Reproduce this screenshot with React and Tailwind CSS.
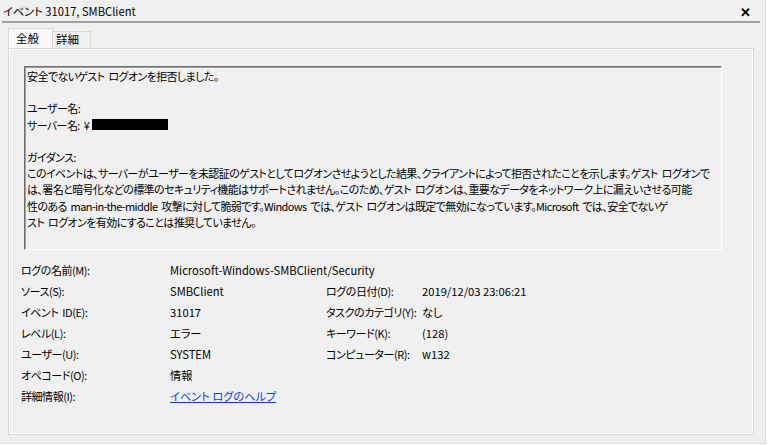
import React from "react";

const font = "font-['Noto_Sans_CJK_JP','Noto_Sans',sans-serif] [font-feature-settings:'palt']";
const cjk = "text-[11px] tracking-[-0.45px] [word-spacing:2px]";
const box = "text-[11px] tracking-[-0.6px] [word-spacing:2px]";
const latin = "text-[11.2px] tracking-normal";

function Row({ a, b, c, d, link }) {
  return (
    <div className="flex h-[21px] items-center">
      <div className={`w-[149px] shrink-0 whitespace-nowrap ${cjk}`}>{a}</div>
      <div className={`w-[156px] shrink-0 whitespace-nowrap ${latin}`}>
        {link ? (
          <span className="text-[#0a3be0] underline">{b}</span>
        ) : (
          b
        )}
      </div>
      {c !== undefined && (
        <div className={`w-[96px] shrink-0 whitespace-nowrap ${cjk}`}>{c}</div>
      )}
      {d !== undefined && (
        <div className={`whitespace-nowrap ${latin}`}>{d}</div>
      )}
    </div>
  );
}

export default function App() {
  return (
    <div className={`w-[768px] h-[445px] bg-white ${font} text-[11.5px] text-black`}>
      <div className="w-[766px] h-[444px] bg-[#f0f0f0] border-r border-b border-[#dcdcdc] flex flex-col">
        {/* title */}
        <div className="h-[21px] flex items-center justify-between pl-[3px] pr-[14px] pt-[1px]">
          <span className="whitespace-nowrap text-[11.2px]">イベント 31017, SMBClient</span>
          <span className="text-[13px] font-bold leading-none">✕</span>
        </div>
        <div className="mx-[2px] w-[758px] h-[2px] bg-[#a0a0a0]" />
        {/* tabs */}
        <div className="flex items-end pl-[8px] mt-[5px] h-[20px]">
          <div className="w-[45px] h-[20px] bg-[#f9f9f9] border border-b-0 border-[#d9d9d9] flex items-center pl-[7px]">
            全般
          </div>
          <div className="w-[38px] h-[17px] bg-[#f0f0f0] border border-l-0 border-b-0 border-[#d9d9d9] flex items-center pl-[3px]">
            詳細
          </div>
        </div>
        {/* panel */}
        <div className="ml-[8px] w-[746px] h-[387px] border border-[#d9d9d9]">
          <div className="w-full h-full border border-white pl-[14px] pt-[16px]">
            <div className="w-[698px] h-[184px] border-t border-l border-[#6e6e6e] border-r border-b border-r-white border-b-white bg-[#f0f0f0]">
              <div className={`w-full h-full border-t border-l border-[#a0a0a0] border-r-0 border-b-0 pl-[1px] leading-[16.2px] whitespace-nowrap ${box}`}>
                <div>安全でないゲスト ログオンを拒否しました。</div>
                <div>&nbsp;</div>
                <div>ユーザー名:</div>
                <div className="flex items-center">
                  サーバー名: ¥<span className="inline-block w-[76px] h-[11px] bg-black ml-[3px]" />
                </div>
                <div>&nbsp;</div>
                <div>ガイダンス:</div>
                <div>このイベントは、サーバーがユーザーを未認証のゲストとしてログオンさせようとした結果、クライアントによって拒否されたことを示します。ゲスト ログオンで</div>
                <div>は、署名と暗号化などの標準のセキュリティ機能はサポートされません。このため、ゲスト ログオンは、重要なデータをネットワーク上に漏えいさせる可能</div>
                <div>性のある man-in-the-middle 攻撃に対して脆弱です。Windows では、ゲスト ログオンは既定で無効になっています。Microsoft では、安全でないゲ</div>
                <div>スト ログオンを有効にすることは推奨していません。</div>
              </div>
            </div>
            <div className="mt-[10px] -ml-[3px]">
              <Row a="ログの名前(M):" b="Microsoft-Windows-SMBClient/Security" />
              <Row a="ソース(S):" b="SMBClient" c="ログの日付(D):" d="2019/12/03 23:06:21" />
              <Row a="イベント ID(E):" b="31017" c="タスクのカテゴリ(Y):" d="なし" />
              <Row a="レベル(L):" b="エラー" c="キーワード(K):" d="(128)" />
              <Row a="ユーザー(U):" b="SYSTEM" c="コンピューター(R):" d="w132" />
              <Row a="オペコード(O):" b="情報" />
              <Row a="詳細情報(I):" b="イベント ログのヘルプ" link />
            </div>
          </div>
        </div>
      </div>
    </div>
  );
}
